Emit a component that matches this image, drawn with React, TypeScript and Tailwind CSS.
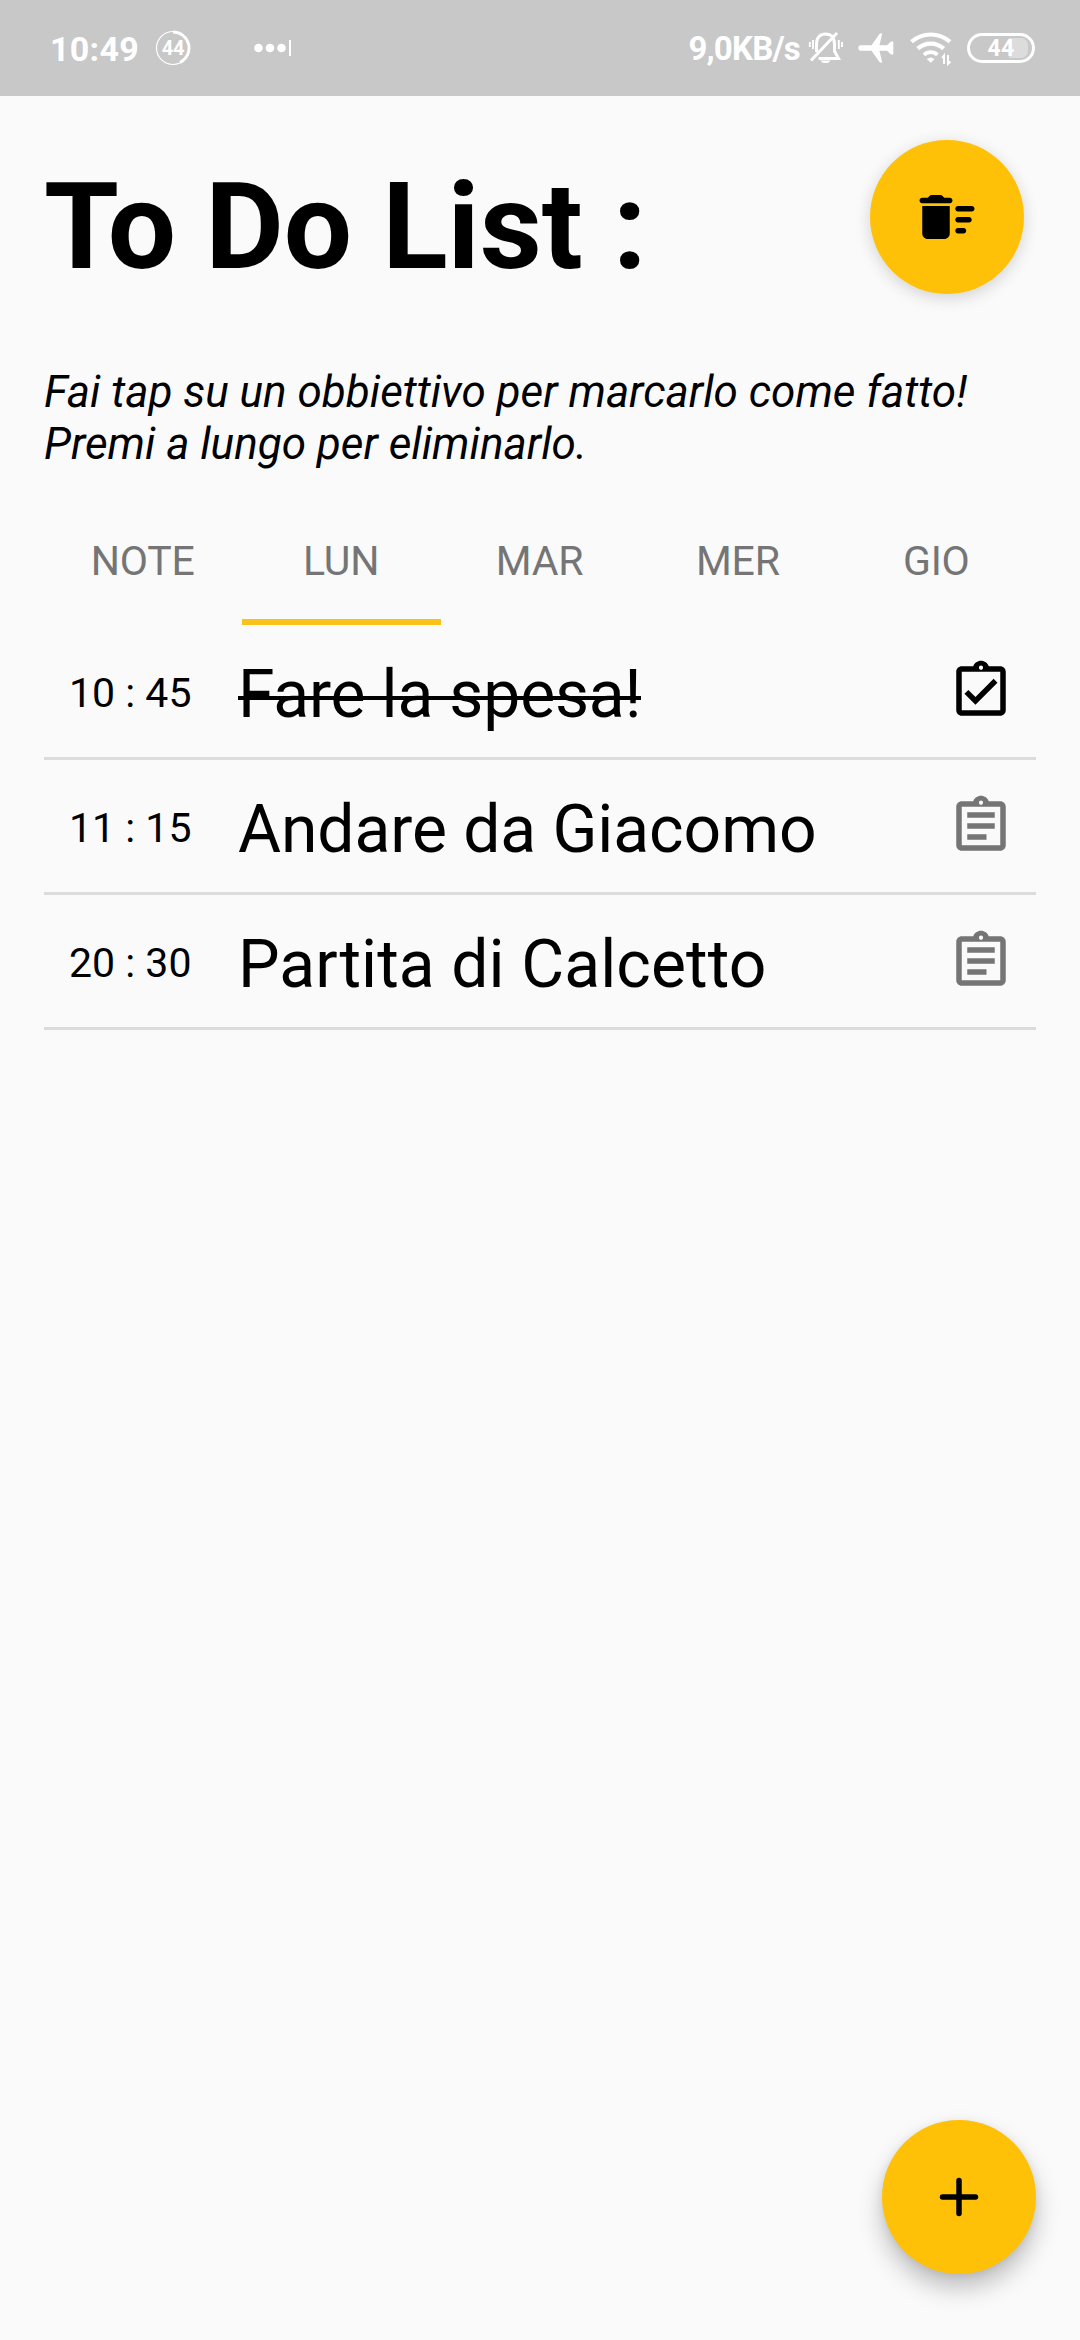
import React from "react";

const tabs = ["NOTE", "LUN", "MAR", "MER", "GIO"];

const tasks = [
  { time: "10 : 45", title: "Fare la spesa!", done: true, tracking: "tracking-[-0.17px]" },
  { time: "11 : 15", title: "Andare da Giacomo", done: false, tracking: "tracking-[-0.08px]" },
  { time: "20 : 30", title: "Partita di Calcetto", done: false, tracking: "tracking-[0.08px]" },
];

function StatusBar() {
  return (
    <header className="flex h-24 items-center bg-[#c8c8c8] pr-[45px] pl-[50px] text-white">
      <span className="mt-px text-[34px] leading-none font-bold tracking-[0.3px]">10:49</span>
      <div className="relative ml-[16px] flex h-9 w-9 items-center justify-center">
        <svg className="absolute inset-0" width="36" height="36" viewBox="0 0 36 36" fill="none" stroke="white">
          <circle cx="18" cy="18" r="16.5" strokeWidth="1.2" />
          <path d="M18 2a16 16 0 0 1 7 30.4" strokeWidth="2.8" />
        </svg>
        <span className="relative text-[20px] leading-none font-bold">44</span>
      </div>
      <svg className="ml-[62px]" width="40" height="20" viewBox="0 0 40 20" fill="white">
        <circle cx="5.5" cy="10" r="4.3" />
        <circle cx="17" cy="10" r="4.3" />
        <circle cx="28.5" cy="10" r="4.3" />
        <rect x="36" y="2" width="2" height="16" />
      </svg>
      <div className="ml-auto flex items-center">
        <span className="mt-px text-[33px] leading-none font-bold tracking-[-0.8px]">9,0KB/s</span>
        <svg className="ml-[8px]" width="36" height="34" viewBox="0 0 36 34" fill="none" stroke="white" strokeWidth="3">
          <path d="M8.5 21V13C8.5 6.500 12 3 17.500 3S26.500 6.500 26.500 13V20L30.500 27.500H10.500" />
          <path d="M29 2L3 29.500" />
          <path d="M12.500 29.500a5.300 3.800 0 0 0 10 0z" fill="white" stroke="none" />
          <path d="M5 9v9M1.800 11v5M30.800 9v9M34 11v5" strokeWidth="1.900" />
        </svg>
        <svg className="ml-[14px]" width="36" height="32" viewBox="0 0 36 32" fill="white">
          <path d="M2 13.300H13.500L21.500 2c.6-.9 2.800-.9 2.500.3L21.500 13.300H29L33 9.500h2.300V22.500H33L29 18.700H21.500l2.500 11c.3 1.200-1.900 1.200-2.500.3L13.500 18.700H2c-2.200-.9-2.200-4.500 0-5.400z" />
        </svg>
        <svg className="ml-[15px]" width="44" height="36" viewBox="0 0 44 36" fill="none" stroke="white" strokeWidth="4.2">
          <path d="M2.500 11.800a29 29 0 0 1 38.500 0" />
          <path d="M8.700 18.600a19.200 19.200 0 0 1 26 0" />
          <path d="M15 24.800a9.500 9.500 0 0 1 13.400 0" strokeWidth="3.800" />
          <path d="M17.800 29q3.900-3 7.800 0L21.700 32.800z" fill="white" stroke="none" />
          <path d="M35 34v-8.500l-2 2.500M39 25v9l2.500-2.500" strokeWidth="2" />
        </svg>
        <div className="ml-[14px] flex h-[30px] w-[68px] items-center justify-center rounded-full border-[3px] border-white">
          <div className="flex h-5 w-[54px] items-center justify-center rounded-[7px] bg-linear-to-r from-transparent from-65% to-[#dcdcdc] to-65%">
            <span className="text-[23px] leading-none font-bold tracking-[0.3px]">44</span>
          </div>
        </div>
      </div>
    </header>
  );
}

function SweepIcon() {
  return (
    <svg width="66" height="66" viewBox="0 0 24 24" fill="black">
      <path d="M16 16h2c.55 0 1 .45 1 1s-.45 1-1 1h-2c-.55 0-1-.45-1-1s.45-1 1-1zm0-8h5c.55 0 1 .45 1 1s-.45 1-1 1h-5c-.55 0-1-.45-1-1s.45-1 1-1zm0 4h4c.55 0 1 .45 1 1s-.45 1-1 1h-4c-.55 0-1-.45-1-1s.45-1 1-1zM3 18c0 1.100.9 2 2 2h6c1.100 0 2-.9 2-2V8H3v10zM13 5h-2l-.71-.71C10.110 4.110 9.850 4 9.590 4H6.410c-.26 0-.52.11-.7.29L5 5H3c-.55 0-1 .45-1 1s.45 1 1 1h10c.55 0 1-.45 1-1s-.45-1-1-1z" />
    </svg>
  );
}

function TaskIcon({ done }: { done: boolean }) {
  return (
    <svg
      className={done ? "mt-[33px] ml-auto text-black" : "mt-[33px] ml-auto text-[#757575]"}
      width="66"
      height="66"
      viewBox="0 0 24 24"
      fill="currentColor"
    >
      <path d="M19 3h-4.180C14.400 1.840 13.300 1 12 1s-2.400.84-2.820 2H5c-1.100 0-2 .9-2 2v14c0 1.100.9 2 2 2h14c1.100 0 2-.9 2-2V5c0-1.100-.9-2-2-2zm-7-.25c.41 0 .75.34.75.75s-.34.75-.75.75-.75-.34-.75-.75.34-.75.75-.75zM19 19H5V5h14v14z" />
      {done ? (
        <path d="M17.990 9l-1.410-1.420-6.590 6.590-2.580-2.570-1.420 1.410 4 3.990z" />
      ) : (
        <path d="M7 15h7v2H7zm0-4h10v2H7zm0-4h10v2H7z" />
      )}
    </svg>
  );
}

export default function App() {
  return (
    <div className="flex h-[2340px] w-[1080px] flex-col overflow-hidden bg-[#fafafa] font-['Roboto',sans-serif] text-black">
      <StatusBar />
      <main className="flex flex-1 flex-col px-11 pb-[66px]">
        <div className="flex items-start pt-11 pr-3">
          <h1 className="mt-4 text-[121px] leading-[142px] font-bold">
            <span className="tracking-[-1px]">To</span> Do List :
          </h1>
          <button className="ml-auto flex h-[154px] w-[154px] items-center justify-center rounded-full bg-[#ffc107] shadow-[0_4px_16px_rgba(0,0,0,0.16)]">
            <SweepIcon />
          </button>
        </div>
        <p className="mt-[68px] text-[44px] leading-[52px] whitespace-nowrap italic">
          Fai tap su un obbiettivo per marcarlo come fatto!
          <br />
          Premi a lungo per eliminarlo.
        </p>
        <nav className="mt-[23px] grid h-[132px] grid-cols-5">
          {tabs.map((tab) => (
            <div
              key={tab}
              className={
                tab === "LUN"
                  ? "border-b-[6px] border-[#f9c31b] pt-11 text-center"
                  : "border-b-[6px] border-transparent pt-11 text-center"
              }
            >
              <span className="block pr-px text-[41px] leading-[48px] tracking-[-0.2px] text-[#757575]">{tab}</span>
            </div>
          ))}
        </nav>
        <ul>
          {tasks.map((task) => (
            <li key={task.title} className="flex h-[135px] items-start border-b-[3px] border-[#dcdcdc] pr-[22px]">
              <span className="mt-11 ml-[25px] w-[169px] text-[41px] leading-[48px] whitespace-pre">{task.time}</span>
              <span className={"relative mt-[31px] text-[66px] leading-[77px] whitespace-nowrap " + task.tracking}>
                {task.title}
                {task.done && <span className="absolute inset-x-0 top-[40px] h-1 bg-black" />}
              </span>
              <TaskIcon done={task.done} />
            </li>
          ))}
        </ul>
        <button className="mt-auto ml-auto flex h-[154px] w-[154px] items-center justify-center rounded-full bg-[#ffc107] shadow-[0_14px_24px_rgba(0,0,0,0.24),0_2px_8px_rgba(0,0,0,0.08)]">
          <svg width="66" height="66" viewBox="0 0 24 24" stroke="black" strokeWidth="2" strokeLinecap="round">
            <path d="M6 12h12M12 6v12" />
          </svg>
        </button>
      </main>
    </div>
  );
}
